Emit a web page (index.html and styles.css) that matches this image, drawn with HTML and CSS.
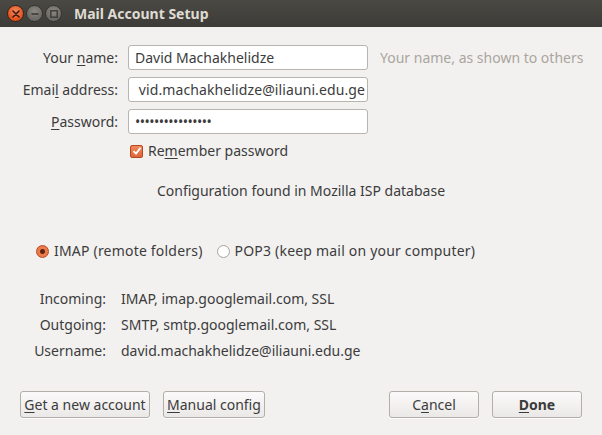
FILE: index.html
```html
<!DOCTYPE html>
<html lang="en">
<head>
    <meta charset="UTF-8">
    <title>Mail Account Setup</title>
    <link rel="stylesheet" href="styles.css">
</head>
<body>
    <div class="window">
        <div class="titlebar">
            <div class="wm-buttons">
                <span class="wm-btn wm-close">
                    <svg width="8" height="8" viewBox="0 0 8 8"><path d="M1 1L7 7M7 1L1 7" stroke="#3a1a10" stroke-width="1.6" stroke-linecap="round"/></svg>
                </span>
                <span class="wm-btn wm-min">
                    <svg width="10" height="10" viewBox="0 0 10 10"><path d="M1.5 5H8.5" stroke="#3c3b37" stroke-width="1.6"/></svg>
                </span>
                <span class="wm-btn wm-max">
                    <svg width="10" height="10" viewBox="0 0 10 10"><rect x="1.8" y="1.8" width="6.4" height="6.4" fill="none" stroke="#3c3b37" stroke-width="1.4"/></svg>
                </span>
            </div>
            <div class="title">Mail Account Setup</div>
        </div>

        <div class="dialog">
            <div class="fields">
                <label class="field-label">Your <u>n</u>ame:</label>
                <div class="text-input">David Machakhelidze</div>
                <span class="hint">Your name, as shown to others</span>

                <label class="field-label">Emai<u>l</u> address:</label>
                <div class="text-input clipped"><span>vid.machakhelidze@iliauni.edu.ge</span></div>
                <span></span>

                <label class="field-label"><u>P</u>assword:</label>
                <div class="text-input password">&#8226;&#8226;&#8226;&#8226;&#8226;&#8226;&#8226;&#8226;&#8226;&#8226;&#8226;&#8226;&#8226;&#8226;&#8226;&#8226;</div>
                <span></span>

                <span></span>
                <div class="check-row">
                    <span class="checkbox">
                        <svg width="10" height="10" viewBox="0 0 10 10"><path d="M1.5 5.2L4 7.6L8.6 1.8" fill="none" stroke="#fff" stroke-width="1.8"/></svg>
                    </span>
                    <span>Re<u>m</u>ember password</span>
                </div>
                <span></span>
            </div>

            <div class="status">Configuration found in Mozilla ISP database</div>

            <div class="protocols">
                <div class="radio-item">
                    <span class="radio checked"></span>
                    <span>IMAP (remote folders)</span>
                </div>
                <div class="radio-item">
                    <span class="radio"></span>
                    <span>POP3 (keep mail on your computer)</span>
                </div>
            </div>

            <div class="summary">
                <span class="summary-label">Incoming:</span>
                <span>IMAP, imap.googlemail.com, SSL</span>
                <span class="summary-label">Outgoing:</span>
                <span>SMTP, smtp.googlemail.com, SSL</span>
                <span class="summary-label">Username:</span>
                <span>david.machakhelidze@iliauni.edu.ge</span>
            </div>

            <div class="actions">
                <div class="actions-left">
                    <button class="btn btn-new"><u>G</u>et a new account</button>
                    <button class="btn btn-manual"><u>M</u>anual config</button>
                </div>
                <div class="actions-right">
                    <button class="btn btn-wide">C<u>a</u>ncel</button>
                    <button class="btn btn-wide btn-default"><u>D</u>one</button>
                </div>
            </div>
        </div>
    </div>
</body>
</html>
```

FILE: styles.css
```css
body {
    margin: 0;
    font-family: "Noto Sans", sans-serif;
    font-size: 14px;
    line-height: 18px;
    color: #3c3c3c;
    background-color: #f2f1f0;
}

u {
    text-decoration-thickness: 1px;
    text-underline-offset: 2px;
}

.window {
    width: 602px;
    height: 435px;
    display: flex;
    flex-direction: column;
}

/* window manager title bar */
.titlebar {
    height: 27px;
    display: flex;
    align-items: center;
    background: linear-gradient(#4a4944, #3c3b37);
}

.wm-buttons {
    display: flex;
    gap: 2px;
    margin-left: 7px;
}

.wm-btn {
    width: 17px;
    height: 17px;
    border-radius: 50%;
    display: flex;
    align-items: center;
    justify-content: center;
    box-sizing: border-box;
    border: 1px solid #35342f;
}

.wm-close {
    background: radial-gradient(circle at 50% 35%, #f48a5b, #e2501c 70%);
    border-color: #3a2418;
}

.wm-min,
.wm-max {
    background: radial-gradient(circle at 50% 35%, #8a8880, #6a6863 70%);
}

.title {
    margin-left: 12px;
    font-weight: bold;
    font-size: 14px;
    color: #dfdbd2;
}

.dialog {
    flex: 1;
    display: flex;
    flex-direction: column;
    padding-top: 18px;
}

/* account fields */
.fields {
    display: grid;
    grid-template-columns: 118px 240px auto;
    column-gap: 10px;
    row-gap: 7px;
    align-items: center;
}

.field-label {
    text-align: right;
}

.text-input {
    height: 25px;
    box-sizing: border-box;
    border: 1px solid #b8b4ae;
    border-radius: 3px;
    background: #fff;
    padding: 0 6px;
    display: flex;
    align-items: center;
    white-space: nowrap;
    overflow: hidden;
}

.text-input.clipped {
    justify-content: flex-end;
    padding-right: 2px;
    letter-spacing: 0.1px;
}

.text-input.password {
    letter-spacing: -0.5px;
    padding-top: 1px;
}

.hint {
    color: #aba59e;
    margin-left: 2px;
}

.check-row {
    display: flex;
    align-items: center;
    gap: 5px;
    margin-left: 2px;
    margin-top: 1px;
}

.checkbox {
    width: 13px;
    height: 13px;
    box-sizing: border-box;
    border: 1px solid #b2481f;
    border-radius: 2px;
    background: linear-gradient(#f08858, #e0663a);
    display: flex;
    align-items: center;
    justify-content: center;
}

.status {
    text-align: center;
    margin-top: 22px;
}

.protocols {
    display: flex;
    gap: 14px;
    margin-top: 42px;
    padding-left: 36px;
    letter-spacing: 0.2px;
}

.radio-item {
    display: flex;
    align-items: center;
    gap: 5px;
}

.radio {
    width: 13px;
    height: 13px;
    box-sizing: border-box;
    border-radius: 50%;
    border: 1px solid #a8a39d;
    background: #fff;
}

.radio.checked {
    border-color: #b6461c;
    background: radial-gradient(circle, #5a2512 0 2px, #ec7a4b 3px);
}

/* server summary */
.summary {
    display: grid;
    grid-template-columns: 106px auto;
    column-gap: 15px;
    row-gap: 8px;
    margin-top: 30px;
}

.summary-label {
    text-align: right;
}

.actions {
    display: flex;
    justify-content: space-between;
    margin-top: auto;
    padding: 0 20px 17px 20px;
}

.actions-left,
.actions-right {
    display: flex;
    gap: 13px;
}

.btn {
    height: 27px;
    font-family: inherit;
    font-size: 14px;
    color: #3c3c3c;
    white-space: nowrap;
    border: 1px solid #b3aea8;
    border-radius: 3px;
    background: linear-gradient(#fbfafa, #ebe9e7);
    padding: 0;
    box-shadow: 0 1px 0 rgba(255,255,255,0.8);
}

.btn-new {
    width: 130px;
}

.btn-manual {
    width: 102px;
}

.btn-wide {
    width: 90px;
}

.btn-default {
    font-weight: bold;
}
```
